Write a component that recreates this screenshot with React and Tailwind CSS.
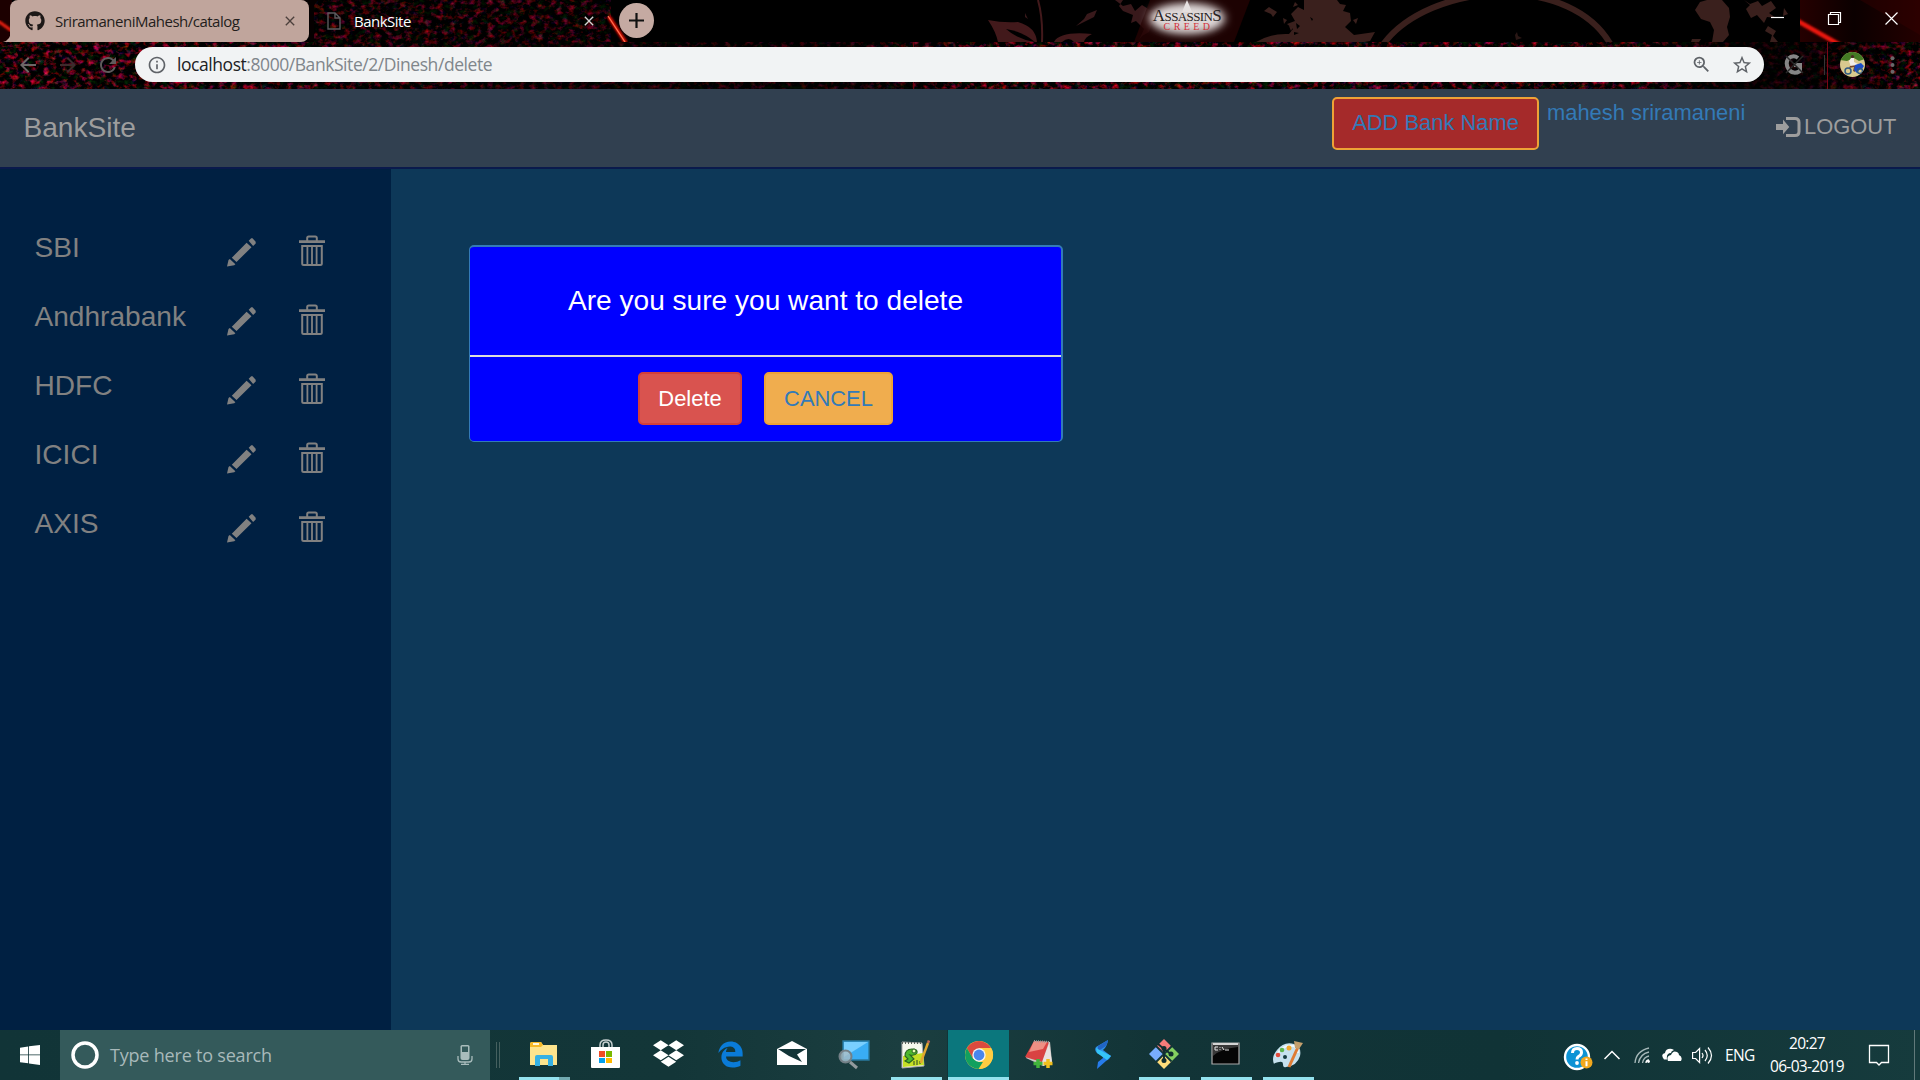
import React from "react";
import { FaGithub, FaDropbox, FaEdgeLegacy } from "react-icons/fa";
import { MdArrowBack, MdArrowForward, MdRefresh, MdInfoOutline, MdZoomIn, MdStarBorder, MdClose } from "react-icons/md";

function ThemeArt() {
  return (
    <svg className="absolute left-0 top-0" width="1920" height="89" viewBox="0 0 1920 89" aria-hidden="true">
      <defs>
        <filter id="grain" x="0" y="0" width="100%" height="100%" colorInterpolationFilters="sRGB">
          <feTurbulence type="fractalNoise" baseFrequency="0.16 0.2" numOctaves="3" seed="8" />
          <feColorMatrix values="2 0 0 0 -0.94  0 0.5 0 0 -0.26  0.5 0 0.5 0 -0.5  0 0 0 0 1" />
        </filter>
        <linearGradient id="shade" x1="0" x2="1">
          <stop offset="0" stopColor="#000" stopOpacity="0" />
          <stop offset=".14" stopColor="#000" stopOpacity=".1" />
          <stop offset=".3" stopColor="#000" stopOpacity=".6" />
          <stop offset=".45" stopColor="#000" stopOpacity=".6" />
          <stop offset=".52" stopColor="#000" stopOpacity="0" />
          <stop offset=".85" stopColor="#000" stopOpacity=".1" />
          <stop offset=".91" stopColor="#000" stopOpacity=".8" />
          <stop offset=".94" stopColor="#000" stopOpacity=".7" />
          <stop offset="1" stopColor="#000" stopOpacity=".1" />
        </linearGradient>
        <linearGradient id="corner" x1="0" x2="1">
          <stop offset="0" stopColor="#250000" />
          <stop offset=".45" stopColor="#0b0000" />
          <stop offset="1" stopColor="#240000" />
        </linearGradient>
        <filter id="soft" x="-30%" y="-60%" width="160%" height="220%"><feGaussianBlur stdDeviation="5" /></filter>
        <filter id="glow"><feGaussianBlur stdDeviation="1" /></filter>
        <clipPath id="strip"><rect width="1920" height="42" /></clipPath>
      </defs>
      <rect width="1920" height="89" fill="#000" />
      <rect y="42" width="1920" height="47" filter="url(#grain)" />
      <rect y="42" width="1920" height="47" fill="url(#shade)" />
      <rect x="309" y="0" width="302" height="42" filter="url(#grain)" />
      <rect x="309" y="0" width="302" height="42" fill="#000" opacity=".35" />
      <g clipPath="url(#strip)">
        <rect width="12" height="42" fill="#1c0000" />
        <path d="M-2 21 12 31" stroke="#f02010" strokeWidth="3" filter="url(#glow)" />
        <path d="M3 42h8V30q0 10-8 12Z" fill="#c0a59c" />
        <rect x="300" width="14" height="14" fill="#2c1d1b" />
        <path d="M311 0h-8q6 2 6 10v32h5V8q0-5 5-8Z" fill="#050000" />
        <path d="M609 17 626 43" stroke="#e01005" strokeWidth="4" filter="url(#glow)" />
        <path d="M608 16 625 42" stroke="#ff7050" strokeWidth="1.3" />
        <path d="M988 20q15 3 30 2 18 5 19 20H998q-2-10-10-22Z" fill="#42191b" />
        <path d="M1006 29q15 2 29 13-18-3-29-13Z" fill="#000" />
        <path d="M1054 42q6-11 38-8-7 3-8 8h-10q-5-6-12 0Z" fill="#42191b" />
        <path d="M1038 0q5 18 4 42" stroke="#42191b" strokeWidth="2" fill="none" />
        <path d="m1115 0 8 6 8-2 4 7 7-6 8 5 8-2-4 8 6 5-8 3-3 8-7 4-3 4 5-11-8-8-5 2 2-8-10-4-4-5 4-6ZM1087 14l10-4-3 7-12 6-6 3 8-7ZM1025 13l3 6-3-2Z" fill="#38191b" />
        <path d="m1150 0 100 0-16 42h-100Z" fill="#240203" opacity=".8" />
        <ellipse cx="1187" cy="18" rx="38" ry="14" fill="#ede7e7" filter="url(#soft)" />
        <ellipse cx="1187" cy="20" rx="31" ry="12" fill="#d8d2d2" opacity=".8" filter="url(#soft)" />
        <path d="M1187 0l5 12h-10Z" fill="#e5e0e0" />
        <path d="M1256 42q15-9 33-8l4-5-6-5 8-3-4-7 7-7 6 3V0h33l3 4 6 1-3 6 7 2 1 8-6 6 9 8 21-3-5 9-17 3Z" fill="#3a201d" />
        <path d="m1264 11 5-4 8 5-4 5-2-3ZM1283 18l4 2-3 4Zm6 8 4 1-2 4Zm6-24 3 3-5 2Zm58 18 5-2-2 6Z" fill="#3a201d" />
        <path d="m1296 23 4 3-3 3Zm14-6 3 2-1 2Zm-16 15 5 1-5 2Z" fill="#000" />
        <path d="M1382 46c46-65 193-75 231 3" stroke="#3a201d" strokeWidth="6" fill="none" />
        <path d="m1515 35 2-3 1 4 4 2-6 2Z" fill="#2a1715" />
        <path d="m1695 10 5-8 7-2h15l7 8 1 9-3 10 2 8-6 7h-11l2-12-4-8-9-3ZM1692 39h9l-2 3h-8ZM1744 0l6 4 8-3 4 5 9-5 5 7-7 5 7 5-9-1-3 6-7-8-6 3-5-9 4-4ZM1768 26l8 5-3 5 5 6h-8l2-7-7-4ZM1784 8l4 6-5 2Z" fill="#3a201d" />
        <rect x="1800" width="120" height="42" fill="url(#corner)" />
        <path d="m1860 0 60 35V0Z" fill="#390000" opacity=".4" />
        <path d="M1796 20 1840 45" stroke="#ef1710" strokeWidth="4.5" filter="url(#glow)" />
        <rect x="1790" width="10" height="42" fill="#000" />
      </g>
      <rect x="913" y="42" width="1" height="47" fill="#6b0510" />
      <rect x="1827" y="42" width="1" height="47" fill="#7b0714" />
    </svg>
  );
}

function Browser() {
  return (
    <header className="relative h-[89px] bg-black font-['Open_Sans',sans-serif]">
      <ThemeArt />
      <div className="relative flex h-[42px]">
        <div className="ml-[10px] flex h-[42px] w-[299px] items-center rounded-t-lg rounded-br-lg bg-[#c0a59c] pl-[15px]">
          <FaGithub className="h-5 w-5 text-[#1d1817]" />
          <span className="-mt-px ml-[10px] w-[227px] whitespace-nowrap text-[15px] leading-5 tracking-[-0.5px] text-[#231d1b]">SriramaneniMahesh/catalog</span>
          <MdClose className="h-4 w-4 text-[#4c403c]" />
        </div>
        <div className="flex w-[302px] items-center pl-[18px]">
          <svg width="14" height="18" viewBox="0 0 14 18" fill="none" stroke="#5b5b5d" strokeWidth="1.4"><path d="M1 1h7l5 5v11H1ZM8 1v5h5" /></svg>
          <span className="-mt-px ml-[13px] w-[227px] whitespace-nowrap text-[15px] leading-5 tracking-[-0.5px] text-white">BankSite</span>
          <MdClose className="h-4 w-4 text-[#d5d5d5]" />
        </div>
        <div className="ml-2 mt-[3px] flex h-[35px] w-[35px] items-center justify-center rounded-full bg-[#c5aaa2]">
          <svg width="15" height="15" viewBox="0 0 15 15" stroke="#111" strokeWidth="2.2"><path d="M7.5 0v15M0 7.5h15" /></svg>
        </div>
        <div className="ml-[496px] w-[74px] pt-[8px] text-center font-['Liberation_Serif',serif]">
          <div className="whitespace-nowrap text-[17px] leading-[15px] tracking-[-0.6px] text-[#272223]">A<span className="text-[13px]">SSASSIN</span>S</div>
          <div className="-mt-px pl-[3px] text-[10px] leading-[8px] tracking-[3.4px] text-[#d3303a]">CREED</div>
        </div>
        <div className="ml-auto flex w-[150px] gap-[42px] pt-[11px]">
          <svg width="15" height="15" stroke="#fff" strokeWidth="1.2"><path d="M1 6.5h13" /></svg>
          <svg width="15" height="15" fill="none" stroke="#fff" strokeWidth="1.2"><path d="M1.5 3.5h10v10h-10ZM3.500 3.500v-2h10v10h-2" /></svg>
          <svg width="15" height="15" stroke="#fff" strokeWidth="1.2"><path d="M1.500 1.500l12 12m0-12-12 12" /></svg>
        </div>
      </div>
      <div className="relative flex h-[47px] pt-[5px]">
        <div className="flex h-[35px] w-[135px] items-center pl-4">
          <MdArrowBack className="h-6 w-6 text-[#6c6767]" />
          <MdArrowForward className="ml-4 h-6 w-6 text-[#3e2b2d]" />
          <MdRefresh className="ml-4 h-6 w-6 text-[#5f5a5b]" />
        </div>
        <div className="flex h-[35px] w-[1629px] items-center rounded-full bg-[#f1f3f4] pl-3 text-[#5f6368]">
          <MdInfoOutline className="h-5 w-5" />
          <span className="-mt-px ml-[10px] w-[1514px] whitespace-nowrap text-[17.5px] leading-6 tracking-[-0.44px] text-[#80868b]"><span className="text-[#202124]">localhost</span>:8000/BankSite/2/Dinesh/delete</span>
          <MdZoomIn className="h-[21px] w-[21px] shrink-0" />
          <MdStarBorder className="ml-[19px] h-[22px] w-[22px] shrink-0" />
        </div>
        <svg className="ml-5" width="21" height="35" viewBox="0 0 21 35" fill="none"><path d="M14 11q-5-4-10 1-3 5 1 11 5 5 11 1v-6h-6" stroke="#858585" strokeWidth="4" /><path d="m2 9 17 17m0-17L2 26" stroke="#292929" strokeWidth="1.5" /></svg>
        <div className="ml-[19px] mt-2 h-5 w-px bg-[#353535]" />
        <svg className="ml-[15px] mt-[5px]" width="25" height="25" viewBox="0 0 25 25">
          <clipPath id="face"><circle cx="12.5" cy="12.5" r="12.5" /></clipPath>
          <g clipPath="url(#face)">
            <rect width="25" height="25" fill="#d8c98f" />
            <path d="M0 0h25v7l-6 2-5-3-7 3-7-1Z" fill="#447a24" />
            <path d="M11 6h3v4l4 2-2 2-5 1-2-6Z" fill="#f2eee8" />
            <circle cx="12.500" cy="4.500" r="1.600" fill="#492d23" />
            <path d="m10 14 7-1-2 7-2-1 1-4-5 1Z" fill="#73452d" />
            <path d="m15 13 6-2 3 3-2 3-3 1-2 3-3-3Z" fill="#1b4dc8" />
            <circle cx="8" cy="19" r="3" fill="none" stroke="#315a82" strokeWidth="1.500" />
            <circle cx="20" cy="19" r="2.500" fill="none" stroke="#315a82" strokeWidth="1.500" />
          </g>
        </svg>
        <svg className="ml-[25px] mt-[9px]" width="5" height="18" fill="#69696b"><circle cx="2.5" cy="2.3" r="2" /><circle cx="2.5" cy="9" r="2" /><circle cx="2.5" cy="15.7" r="2" /></svg>
      </div>
    </header>
  );
}

function Navbar() {
  return (
    <nav className="flex h-20 border-b-2 border-[#0a1a4c] bg-[#314050] pl-[23.5px] text-[21.9px] text-[#9d9d9d]">
      <span className="w-[1308.5px] pt-[23px] text-[28.1px] leading-8">BankSite</span>
      <button className="mt-2 h-[53px] w-[207px] whitespace-nowrap rounded-[5px] border-2 border-[#eea236] bg-[#a52a2a] pb-px text-[#337ab7]">ADD Bank Name</button>
      <a className="ml-[8px] mt-[10px] w-[229px] leading-[28px] text-[#337ab7]">mahesh sriramaneni</a>
      <div className="mt-[24px] flex h-7 items-center whitespace-nowrap">
        <svg className="mt-px shrink-0" width="25" height="21" viewBox="0 0 25 21"><path d="M0 7h7V2.5l6.3 7.6L7 17.300V13H0Z" fill="currentColor" /><path d="M10 1.500h9q4 0 4 4v9q0 4-4 4h-9" fill="none" stroke="currentColor" strokeWidth="3" /></svg>
        <span className="ml-[3px]">LOGOUT</span>
      </div>
    </nav>
  );
}

const BANKS = ["SBI", "Andhrabank", "HDFC", "ICICI", "AXIS"];

function Sidebar() {
  return (
    <aside className="w-[391px] bg-[#002042] pl-[34px] pt-[62px] text-[#818181]">
      {BANKS.map((name) => (
        <div key={name} className="flex h-[69px]">
          <span className="w-[193px] pl-[0.5px] pt-px text-[28.1px] leading-8">{name}</span>
          <svg className="mt-[6.500px]" width="29" height="29" viewBox="0 0 29 29" fill="currentColor"><path d="m0 28.400 1.500-6.500 1.300-1 5.600 5.400-1.200 1Zm4.800-8.700L19.600 4.800l4.900 4.400L9.500 24ZM21.700 2.800 24.200.2h1.300l3.200 3.600v1.600L26.100 8Z" /></svg>
          <svg className="ml-[43px] mt-1" width="26" height="32" viewBox="0 0 26 32"><path d="M8.200 6V3q0-1.500 1.500-1.500h6.600q1.500 0 1.500 1.500v3M3.200 11h19.600v17.500q0 1.500-1.500 1.500H4.700q-1.500 0-1.500-1.500Z" fill="none" stroke="currentColor" strokeWidth="2" /><path d="M0 5.300h26v2.800H0ZM7.500 11h1.800v19H7.500Zm4.600 0h1.800v19h-1.800Zm4.600 0h1.800v19h-1.800Z" fill="currentColor" /></svg>
        </div>
      ))}
    </aside>
  );
}

function Dialog() {
  return (
    <section className="ml-[78px] mt-[76px] h-[197px] w-[594px] rounded-[5px] border border-r-2 border-t-2 border-[#337ab7] bg-[#0000ff] text-center">
      <div className="h-[110px] border-b-2 border-[#dddddd] pt-[38px] text-[28.1px] leading-8 text-white">Are you sure you want to delete</div>
      <div className="flex justify-center gap-[22px] pt-[15px] text-[21.9px]">
        <button className="h-[53px] w-[104px] rounded-[5px] border-2 border-[#d43f3a] bg-[#d9534f] pt-px text-white">Delete</button>
        <button className="h-[53px] w-[129px] rounded-[5px] border-2 border-[#eea236] bg-[#f0ad4e] pt-px text-[#337ab7]">CANCEL</button>
      </div>
    </section>
  );
}

function Svg({ children }) {
  return <svg width="32" height="32" viewBox="0 0 32 32" fill="none">{children}</svg>;
}

const Explorer = () => (
  <Svg><path d="M2 5q0-2 2-2h9l2 3h14v20H2Z" fill="#fde48d" /><path d="M2 5q0-2 2-2h9l2 3-2 2H2Z" fill="#f6b928" /><path d="M5 4h6v2H5Z" fill="#fff8dc" /><path d="M7 27V18q0-2 2-2h14q2 0 2 2v9h-5v-7h-8v7Z" fill="#36b1e4" /></Svg>
);
const Store = () => (
  <Svg><path d="M10 9V6q0-5 6-5t6 5v3M13 9V6q0-3 3-3t3 3v3" stroke="#c6d0d0" strokeWidth="1.5" /><path d="M1 8h29v20q0 1-1 1H2q-1 0-1-1Z" fill="#fff" /><path d="M9 12h6v6H9Z" fill="#f04c26" /><path d="M16 12h6v6h-6Z" fill="#7ab800" /><path d="M9 19h6v5H9Z" fill="#00a0ee" /><path d="M16 19h6v5h-6Z" fill="#ffb900" /></Svg>
);
const Mail = () => (
  <Svg><path d="m1 10 15-8 15 8v16H1Z" fill="#fff" /><path d="M2 10h28l-9 5.500 5 7.500-13-6Z" fill="#123437" /></Svg>
);
const Finder = () => (
  <Svg><path d="M5 2h26v19H5Z" fill="#39adf5" stroke="#28789e" strokeWidth="1.4" /><path d="M6 3h24L6 18Z" fill="#79cfff" /><circle cx="7.5" cy="17.5" r="6" fill="#a9bdc6" opacity=".8" /><circle cx="7.5" cy="17.5" r="6" stroke="#748087" strokeWidth="2" /><path d="m12 23 7 6" stroke="#929a9d" strokeWidth="3" /></Svg>
);
const Notepad = () => (
  <Svg><path d="m2 3 20 1 2 23-22 2Z" fill="#f6f8ed" stroke="#aaa" /><path d="m3 17 20-3 1 12-21 2Z" fill="#c5df25" /><path d="M2 4h20" stroke="#59615a" strokeWidth="2" strokeDasharray="1 2" /><path d="M5 17q0-7 7-7 6 0 5 4-2 3-7 2l4 4-5 4-4-2 3-2Z" fill="#4db82c" stroke="#28651f" strokeWidth="1.1" /><circle cx="14" cy="12" r="2" fill="#eaffb0" stroke="#28651f" /><path d="M14 26v-4m3 4v-5m3 4v-3" stroke="#294529" /><path d="m28 4-6 16-1 4" stroke="#e2a82f" strokeWidth="2.500" /><path d="m28 4 1-2.500" stroke="#c06a54" strokeWidth="2.500" /></Svg>
);
const Chrome = () => (
  <Svg><circle cx="16" cy="16" r="14" fill="#ffcd42" /><path d="M3.900 9A14 14 0 0 1 28.100 9H16L9.900 19.500Z" fill="#db4a3e" /><path d="M3.900 9 9.900 19.500 16 23h6L16 30A14 14 0 0 1 3.900 9Z" fill="#12a05f" /><path d="M16 9h12.100A14 14 0 0 1 15.500 30l6.600-10.500Z" fill="#ffcd42" /><circle cx="16" cy="16" r="6.700" fill="#f4f5f5" /><circle cx="16" cy="16" r="5.400" fill="#4986ed" /></Svg>
);
const Book = () => (
  <Svg><path d="m11 2 15 1 2 20-9 4-17-8Z" fill="#cfc8c7" /><path d="m18 22 7-17 3 18-9 4Z" fill="#e9e2e0" /><path d="m10 2 15 1-7 20-17-5Z" fill="#d94242" /><path d="m10 2 13 1-4 7L5 13Z" fill="#ee8f84" /><path d="m10 2 15 1" stroke="#999" strokeDasharray="1 1" strokeWidth="2" /><path d="M14 20v9m-4.500-4.500h9" stroke="#42b43c" strokeWidth="3.500" /><path d="M24 20v9m-4.500-4.500h9" stroke="#f0bf1e" strokeWidth="3.500" /></Svg>
);
const Bolt = () => (
  <Svg><path d="M22 1 10 8q-2 3 1 6l8 4 6-1-8-6q4-3 5-10Z" fill="#2d8fe8" /><path d="M22 1 12 7v5l5-3q5-3 5-8Z" fill="#2165c6" /><path d="M25 17q-1 3-5 5l-9 8 1-7 5-4-1-4Z" fill="#277ceb" /><path d="m10 9 15 8-4 4-10-7Z" fill="#35c4f7" /></Svg>
);
const Git = () => (
  <Svg><path d="m16 0 7.500 7.500L16 15 8.500 7.500Z" fill="#f67b7a" /><path d="m23.500 7.500 7.500 7.500-7.500 7.500L16 15Z" fill="#84cf60" /><path d="m16 15 7.500 7.500L16 30l-7.500-7.500Z" fill="#ffdd7a" /><path d="m8.500 7.500 7.500 7.500-7.500 7.500L1 15Z" fill="#79adff" /><path d="m8 7 15.500 15.500M24 7 8 23" stroke="#123437" strokeWidth="1.800" /><path d="m10 5 6 5v12m0-12 7 5" stroke="#102d2f" strokeWidth="2" /><circle cx="16" cy="9.500" r="2.500" fill="#102d2f" /><circle cx="23" cy="15" r="2.500" fill="#102d2f" /><circle cx="16" cy="21.500" r="2.500" fill="#102d2f" /></Svg>
);
const Terminal = () => (
  <Svg><path d="M2 4h27v21H2Z" fill="#050505" stroke="#aaa" strokeWidth="1.200" /><path d="M3 4h25v2H3Z" fill="#d5d5d5" /><path d="M3 6h25v2q-18 2-25 9Z" fill="#383838" /><path d="M8 8H5v3h3M10 8v.8m0 1.400v.8m2-3 2 3m1 0h4" stroke="#e5e5e5" strokeWidth="1" /></Svg>
);
const Paint = () => (
  <Svg><path d="M2 25q-3-7 3-14Q12 2 22 5q8 3 6 12-3 10-14 11-3 1-3-3 0-3-4-2-5 1-5 2Z" fill="#c6e1ee" /><path d="M4 18q5-13 18-11 4 3 4 7" stroke="#eff8fc" strokeWidth="2" /><circle cx="6" cy="16" r="2.300" fill="#e34b3b" /><circle cx="10" cy="11" r="2.300" fill="#5eb64d" /><circle cx="17" cy="9" r="2.500" fill="#f1a72e" /><circle cx="13" cy="18" r="2" fill="#173b40" /><path d="m26 8-9 20" stroke="#df7c35" strokeWidth="3" /><path d="m22 2 9 2-4 6-4-1Z" fill="#c4a06d" /></Svg>
);

const APPS = [
  { id: "explorer", icon: <Explorer />, bar: "split" },
  { id: "store", icon: <Store /> },
  { id: "dropbox", icon: <FaDropbox className="mt-[-4px] h-[31px] w-[31px] text-white" /> },
  { id: "edge", icon: <FaEdgeLegacy className="mt-[-2px] h-[27px] w-[27px] text-[#0a7bd8]" /> },
  { id: "mail", icon: <Mail /> },
  { id: "finder", icon: <Finder /> },
  { id: "notepad", icon: <Notepad />, bar: "on" },
  { id: "chrome", icon: <Chrome />, bar: "active" },
  { id: "book", icon: <Book /> },
  { id: "bolt", icon: <Bolt /> },
  { id: "git", icon: <Git />, bar: "on" },
  { id: "terminal", icon: <Terminal />, bar: "on" },
  { id: "paint", icon: <Paint />, bar: "on" },
];

function TaskItem({ icon, bar }) {
  return (
    <div className={bar === "active" ? "flex w-[62px] flex-col items-center border-l border-[#123437] bg-[#0b777d]" : "flex w-[62px] flex-col items-center"}>
      <div className="flex h-[47px] items-center pt-[3px]">{icon}</div>
      {bar === "active" && <div className="h-[3px] w-full bg-[#94e2ee]" />}
      {bar === "on" && <div className="h-[3px] w-[51px] bg-[#94e2ee]" />}
      {bar === "split" && <div className="flex h-[3px] w-[51px]"><i className="w-10 bg-[#94e2ee]" /><i className="w-[11px] bg-[#72aab0]" /></div>}
    </div>
  );
}

function Taskbar() {
  return (
    <footer className="flex h-[50px] bg-[linear-gradient(90deg,#113437,#133638_35%,#1b3e40_47%,#123437_60%,#103336_78%,#163b3d)] font-['Open_Sans',sans-serif] text-white">
      <div className="w-[60px] pl-5 pt-[15px]">
        <svg width="20" height="20" viewBox="0 0 20 20" fill="#fff"><path d="M0 2.700 8.200 1.500v8H0ZM9 1.300 20 0v9.500H9ZM0 10.300h8.200v8L0 17.300ZM9 10.300h11V20L9 18.500Z" /></svg>
      </div>
      <div className="flex w-[430px] items-center bg-[#345a5b] pl-[11px]">
        <svg width="28" height="28"><circle cx="14" cy="14" r="12" fill="none" stroke="#fff" strokeWidth="3.500" /></svg>
        <span className="ml-[11px] w-[347px] whitespace-nowrap text-[18px] tracking-[-0.2px] text-[#a8b9ba]">Type here to search</span>
        <svg width="16" height="20" viewBox="0 0 16 20"><path d="M3.500 1.500q0-1.500 1.500-1.500h6q1.500 0 1.500 1.500V13q0 2-2 2h-5q-2 0-2-2Z" fill="#a9bcbc" /><path d="M5 1.500h6V7H5Z" fill="#345a5b" /><path d="M1 11v3q0 3 3 3h8q3 0 3-3v-3M8 17v2M4 19.500h8" fill="none" stroke="#a9bcbc" strokeWidth="1.300" /></svg>
      </div>
      <div className="ml-[6px] mr-[13px] mt-3 h-[26px] w-1 border-x border-[#45605f]" />
      {APPS.map((app) => <TaskItem key={app.id} icon={app.icon} bar={app.bar} />)}
      <div className="ml-auto flex w-[357px]">
        <svg width="30" height="50" viewBox="0 0 30 50"><circle cx="14" cy="27" r="12" fill="#0d93d5" stroke="#fff" strokeWidth="2.400" /><path d="M9.500 23q0-4.500 4.500-4.500t4.500 4q0 2.500-3 4-1.500 1-1.500 3" fill="none" stroke="#fff" strokeWidth="3" /><circle cx="14" cy="33" r="1.900" fill="#fff" /><circle cx="23.500" cy="32.500" r="6" fill="#f2a81d" /><path d="M23.500 28.500v1.600m0 1.200v5" stroke="#fff" strokeWidth="2" /></svg>
        <svg className="ml-[11px]" width="16" height="50" fill="none" stroke="#fff" strokeWidth="1.500"><path d="m.5 29 7.500-7.500 7.500 7.500" /></svg>
        <svg className="ml-[14px]" width="18" height="50" fill="none" stroke="#a7b9ba" strokeWidth="1.300"><path d="M1 33Q2 21 15 18M4.500 33Q6 24 15 22M8.500 33q1-6 6.500-7" /><path d="M12 33q0-3 3-3" stroke="#fff" /><circle cx="14.500" cy="31.500" r="1.400" fill="#fff" stroke="none" /></svg>
        <svg className="ml-[10px]" width="20" height="50" fill="#fff"><path d="M2 29.500Q-2 24 3 23q1-5 7-4l2 1q-3 1-3 3-5 0-4 6.500Z" /><path d="M6 31q-2-5 3-6 2-5 6-3 2 1 2 3 4 2 2 6Z" /></svg>
        <svg className="ml-[10px]" width="21" height="50" fill="none" stroke="#fff" strokeWidth="1.200"><path d="M.6 22.500h3l4-4v14l-4-4h-3ZM10 23q2 2.500 0 5M13 20q4.500 5.500 0 11M16 17.500q7 8 0 16" /></svg>
        <span className="ml-[12px] w-[40px] pt-[14px] text-[15.500px] leading-[22px] tracking-[-0.700px]">ENG</span>
        <div className="ml-[3px] w-[78px] whitespace-nowrap pt-[2px] text-center text-[15.500px] leading-[23px] tracking-[-0.700px]"><div>20:27</div><div>06-03-2019</div></div>
        <svg className="ml-[22px]" width="22" height="50" fill="none" stroke="#fff" strokeWidth="1.300"><path d="M1.500 15.500h19v17h-7l-2.500 2.500-2.500-2.500h-7Z" /></svg>
        <div className="ml-6 w-px bg-[#61797a]" />
      </div>
    </footer>
  );
}

export default function App() {
  return (
    <div className="flex h-[1080px] w-[1920px] flex-col overflow-hidden font-['Liberation_Sans',sans-serif]">
      <Browser />
      <Navbar />
      <main className="flex h-[861px] bg-[#0d3858]">
        <Sidebar />
        <Dialog />
      </main>
      <Taskbar />
    </div>
  );
}
